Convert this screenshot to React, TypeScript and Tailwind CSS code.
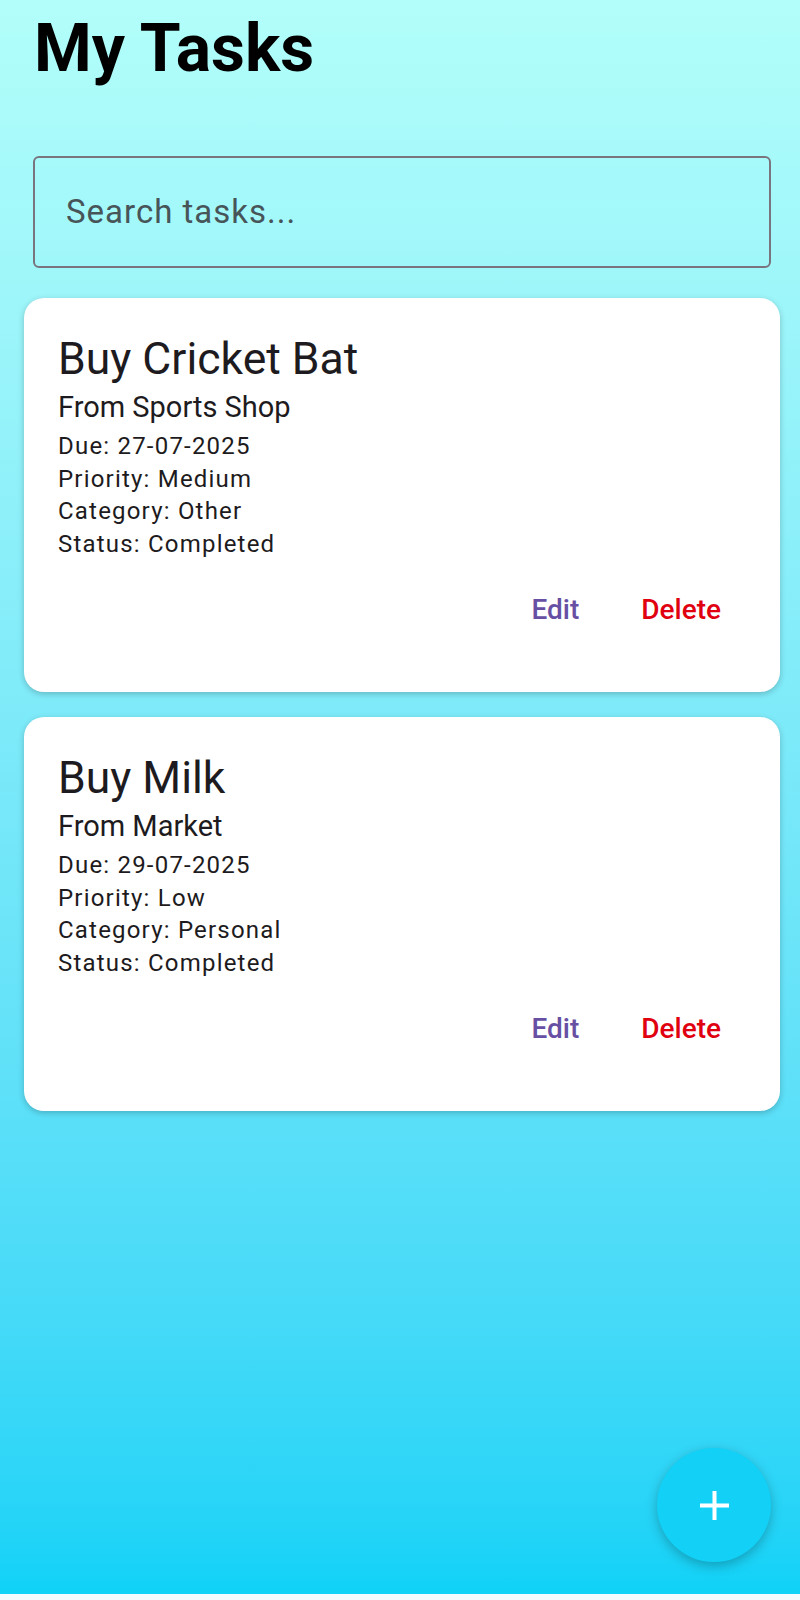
import React from 'react';

type Task = {
  title: string;
  description: string;
  due: string;
  priority: string;
  category: string;
  status: string;
};

const tasks: Task[] = [
  {
    title: 'Buy Cricket Bat',
    description: 'From Sports Shop',
    due: '27-07-2025',
    priority: 'Medium',
    category: 'Other',
    status: 'Completed',
  },
  {
    title: 'Buy Milk',
    description: 'From Market',
    due: '29-07-2025',
    priority: 'Low',
    category: 'Personal',
    status: 'Completed',
  },
];

function TaskCard({ task }: { task: Task }) {
  return (
    <div className="h-[394px] bg-white rounded-[20px] shadow-[0_2px_6px_rgba(0,0,0,0.22)] pl-[34px] pt-[37px] flex flex-col text-[#1d1b20]">
      <h2 className="text-[44.5px] leading-[48px]">{task.title}</h2>
      <p className="pt-[2px] text-[29px] leading-[44px]">{task.description}</p>
      <div className="pt-[1px] text-[24px] leading-[32.6px] tracking-[1.2px]">
        <p>Due: {task.due}</p>
        <p>Priority: {task.priority}</p>
        <p>Category: {task.category}</p>
        <p>Status: {task.status}</p>
      </div>
      <div className="mt-[30px] flex justify-end gap-[62px] pr-[59px] text-[28px] leading-[40px] font-medium">
        <button className="text-[#6750a4]">Edit</button>
        <button className="text-[#e0000f]">Delete</button>
      </div>
    </div>
  );
}

export default function App() {
  return (
    <div className="w-[800px] h-[1600px] flex flex-col font-['Roboto',sans-serif] relative">
      <main className="h-[1594px] bg-gradient-to-b from-[#b2fefa] to-[#0ed2f7] pl-[24px] pr-[20px]">
        {/* Header */}
        <h1 className="pt-[16px] pl-[10px] text-[66px] leading-[66px] font-bold text-black">
          My Tasks
        </h1>

        {/* Search */}
        <div className="mt-[74px] mx-[9px] h-[112px] border-2 border-[#79747e] rounded-[6px] flex items-center pl-[31px]">
          <span className="text-[33px] tracking-[1px] text-[#475559]">Search tasks...</span>
        </div>

        {/* Task list */}
        <div className="mt-[30px] flex flex-col gap-[25px]">
          {tasks.map((t, i) => (
            <TaskCard key={i} task={t} />
          ))}
        </div>
      </main>
      <div className="h-[6px] bg-[#f2fcfe]" />

      {/* FAB */}
      <button className="absolute left-[657px] top-[1448px] w-[114px] h-[114px] rounded-full bg-[#12d0f6] shadow-[0_4px_12px_rgba(0,0,0,0.25)] flex items-center justify-center">
        <svg width="29" height="29" viewBox="0 0 29 29">
          <rect x="12.5" y="0" width="4" height="29" fill="white" />
          <rect x="0" y="12.5" width="29" height="4" fill="white" />
        </svg>
      </button>
    </div>
  );
}
